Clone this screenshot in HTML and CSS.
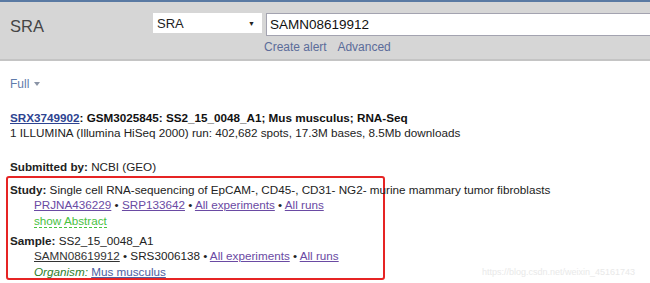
FILE: index.html
```html
<!DOCTYPE html>
<html>
    <head>
        <link rel="stylesheet" href="styles.css">
    </head>
    <body>
        <div class="header">
            <div class="dbTitle">SRA</div>
            <div class="searchArea">
                <div class="searchRow">
                    <div class="dbSelect"><span>SRA</span><span class="arrow">&#9660;</span></div>
                    <div class="searchInput">SAMN08619912</div>
                </div>
                <div class="searchLinks">
                    <a href="#">Create alert</a>
                    <a href="#">Advanced</a>
                </div>
            </div>
        </div>

        <div class="content">
            <div class="format">Full <span class="caret"></span></div>

            <div class="record">
                <div class="title"><a class="acc" href="#">SRX3749902</a>: GSM3025845: SS2_15_0048_A1; Mus musculus; RNA-Seq</div>
                <div>1 ILLUMINA (Illumina HiSeq 2000) run: 402,682 spots, 17.3M bases, 8.5Mb downloads</div>
            </div>

            <div class="submitted"><b>Submitted by:</b> NCBI (GEO)</div>

            <div class="highlight">
                <div class="section">
                    <div><b>Study:</b> Single cell RNA-sequencing of EpCAM-, CD45-, CD31- NG2- murine mammary tumor fibroblasts</div>
                    <div class="indent">
                        <a class="visited" href="#">PRJNA436229</a> &bull;
                        <a class="visited" href="#">SRP133642</a> &bull;
                        <a class="visited" href="#">All experiments</a> &bull;
                        <a class="visited" href="#">All runs</a>
                    </div>
                    <div class="indent"><span class="abstract">show Abstract</span></div>
                </div>
                <div class="section">
                    <div><b>Sample:</b> SS2_15_0048_A1</div>
                    <div class="indent">
                        <a class="plain" href="#">SAMN08619912</a> &bull; SRS3006138 &bull;
                        <a class="visited" href="#">All experiments</a> &bull;
                        <a class="visited" href="#">All runs</a>
                    </div>
                    <div class="indent"><i class="organism">Organism:</i> <a class="species" href="#">Mus musculus</a></div>
                </div>
            </div>
        </div>

        <div class="watermark">https://blog.csdn.net/weixin_45161743</div>
    </body>
</html>
```

FILE: styles.css
```css
body {
    margin: 0;
    font-family: "Liberation Sans", Arial, sans-serif;
    font-size: 11.7px;
    color: #222;
    background: #fff;
    position: relative;
    height: 283px;
    overflow: hidden;
}

.header {
    display: flex;
    background-color: #d6d6d6;
    border-top: 2px solid #5a7aa3;
    border-bottom: 2px solid #c4c4c4;
    height: 57px;
}

.dbTitle {
    width: 143px;
    padding: 15px 0 0 10px;
    font-size: 16.5px;
    color: #454545;
}

.searchArea {
    flex: 1;
    padding-top: 11px;
}

.searchRow {
    display: flex;
    align-items: flex-start;
}

.dbSelect {
    display: flex;
    justify-content: space-between;
    align-items: center;
    width: 98px;
    height: 20px;
    padding: 0 7px 0 4px;
    background: #fff;
    font-size: 13px;
    color: #222;
}

.dbSelect .arrow {
    font-size: 7px;
    color: #222;
}

.searchInput {
    flex: 1;
    margin-left: 4px;
    height: 21px;
    padding-left: 3px;
    background: #fff;
    border: 1px solid #a3a3b0;
    border-right: none;
    font-size: 13.5px;
    line-height: 21px;
    color: #111;
}

.searchLinks {
    padding: 4px 0 0 111px;
    font-size: 12px;
}

.searchLinks a {
    color: #5b6c9a;
    text-decoration: none;
    margin-right: 8px;
}

.content {
    padding: 16px 0 0 10px;
    line-height: 15px;
}

.format {
    color: #5f7bab;
    font-size: 12px;
}

.caret {
    display: inline-block;
    border-left: 3px solid transparent;
    border-right: 3px solid transparent;
    border-top: 4px solid #8a94a6;
    vertical-align: 2px;
    margin-left: 1px;
}

.record {
    margin-top: 18px;
}

.title {
    font-weight: bold;
    color: #111;
}

.acc {
    color: #2d4391;
}

.submitted {
    margin-top: 19px;
}

.highlight {
    margin: 2px 0 0 -4px;
    width: 379px;
    height: 104px;
    border: 2px solid #e62424;
    border-radius: 3px;
    padding: 4px 0 0 2px;
    box-sizing: border-box;
    white-space: nowrap;
}

.section {
    margin-bottom: 5px;
}

.indent {
    padding-left: 24px;
    line-height: 15.5px;
}

.visited {
    color: #6a4aa3;
}

.plain {
    color: #333;
}

.abstract {
    color: #49c23f;
    border-bottom: 1px dashed #49c23f;
}

.organism {
    color: #2e7d2a;
}

.species {
    color: #4c60a3;
}

.watermark {
    position: absolute;
    left: 482px;
    top: 267px;
    font-size: 9px;
    color: #e9e9e9;
}
```
